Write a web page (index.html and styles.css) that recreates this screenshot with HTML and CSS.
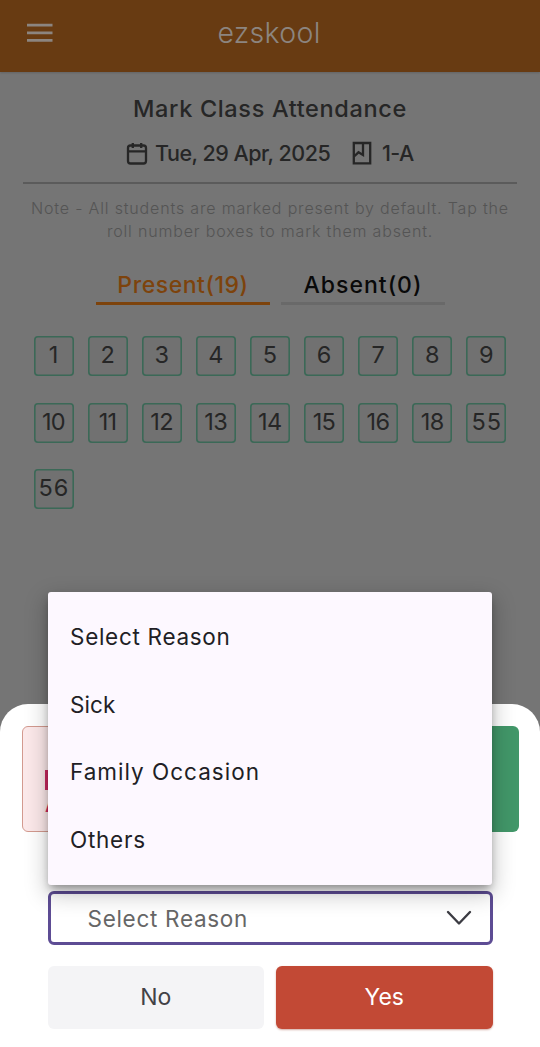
FILE: index.html
```html
<!DOCTYPE html>
<html lang="en">
<head>
<meta charset="utf-8">
<title>ezskool</title>
<link rel="stylesheet" href="styles.css">
</head>
<body>
<div class="screen">
  <header class="bar">
    <svg class="menu" width="28" height="20" viewBox="0 0 28 20"><path d="M1 2.2H26.5M1 9.8H26.5M1 17.3H26.5" stroke="currentColor" stroke-width="2.8"/></svg>
    <span class="brand">ezskool</span>
  </header>
  <main class="page">
    <h1 class="title">Mark Class Attendance</h1>
    <div class="meta">
      <svg class="cal" width="22" height="24" viewBox="0 0 22 24" fill="none" stroke="currentColor" stroke-width="2.3"><rect x="2" y="4.5" width="18" height="18" rx="2.5"/><path d="M2 10.3H20M6.8 2V7M15.2 2V7"/></svg>
      <span class="date">Tue, 29 Apr, 2025</span>
      <svg class="book" width="20" height="24" viewBox="0 0 20 24" fill="none" stroke="currentColor" stroke-width="2.3"><path d="M1.8 2H18.2V22.3H1.8ZM11 2V14L6.5 11.3L2 15.5"/></svg>
      <span class="cls">1-A</span>
    </div>
    <hr class="rule">
    <p class="note"><span class="n1">Note - All students are marked present by default. Tap the</span><br><span class="n2">roll number boxes to mark them absent.</span></p>
    <nav class="tabs">
      <span class="tab present"><span>Present(19)</span></span>
      <span class="tab absent"><span>Absent(0)</span></span>
    </nav>
    <div class="grid">
      <span>1</span><span>2</span><span>3</span><span>4</span><span>5</span><span>6</span><span>7</span><span>8</span><span>9</span>
      <span class="tight">10</span><span class="tight">11</span><span class="tight">12</span><span class="tight">13</span><span class="tight">14</span><span class="tight">15</span><span class="tight">16</span><span class="tight">18</span><span class="wide">55</span>
      <span class="wide">56</span>
    </div>
  </main>
  <section class="sheet">
    <div class="cards">
      <div class="card pink"><i class="mark"></i><b class="initial">A</b></div>
      <div class="card green"></div>
    </div>
    <div class="form">
      <div class="select">
        <span>Select Reason</span>
        <svg width="26" height="16" viewBox="0 0 26 16" fill="none" stroke="#3c3c43" stroke-width="2.4" stroke-linecap="round" stroke-linejoin="round"><path d="M2 2L13 13.5L24 2"/></svg>
      </div>
      <div class="actions">
        <button class="btn no">No</button>
        <button class="btn yes">Yes</button>
      </div>
    </div>
  </section>
  <ul class="popup">
    <li class="o1">Select Reason</li><li class="o2">Sick</li><li class="o3">Family Occasion</li><li class="o4">Others</li>
  </ul>
</div>
</body>
</html>
```

FILE: styles.css
```css
* { box-sizing: border-box; }
body { margin: 0; font-family: Inter, "Liberation Sans", sans-serif; }
.screen { position: relative; width: 540px; height: 1047px; background: #757575; overflow: hidden; display: flex; flex-direction: column; color: #262626; }
.bar { height: 72px; background: #683b12; color: #8c8580; display: grid; grid-template-columns: 80px 1fr 80px; align-items: center; padding-bottom: 6px; box-shadow: 0 1px 2px rgba(0,0,0,.15); }
.menu { margin-left: 25.5px; }
.brand { text-align: center; font-size: 28.5px; font-weight: 350; letter-spacing: .3px; margin: 0 2px 2px 0; }
.page { flex: 1; padding: 0 23px; }
.title { margin: 22px 0 0; font-size: 23.5px; line-height: 30px; font-weight: 500; text-align: center; letter-spacing: .65px; white-space: nowrap; }
.meta { display: flex; margin: 17px 0 0 103px; height: 24px; align-items: center; font-size: 21.5px; font-weight: 500; white-space: nowrap; }
.date { margin-left: 7px; width: 175px; letter-spacing: -.5px; }
.book { margin-left: 22px; }
.cls { margin-left: 10px; letter-spacing: -.6px; }
.rule { margin: 17px 0 0; border: 0; height: 2px; background: #5b5b5b; }
.note { margin: 13px 0 0; font-size: 16px; line-height: 22.5px; text-align: center; color: #545454; font-weight: 350; white-space: nowrap; letter-spacing: .83px; }
.tabs { display: flex; gap: 11px; margin: 26px 0 0 73px; }
.tab { height: 36.5px; font-size: 23px; font-weight: 500; line-height: 34px; text-align: center; border-bottom: 3px solid #7d430c; color: #7d430c; width: 174px; white-space: nowrap; letter-spacing: .55px; }
.tab.absent { width: 164px; color: #090909; border-color: #696969; letter-spacing: 1px; }
.grid { display: grid; grid-template-columns: repeat(9, 40px); column-gap: 14.1px; row-gap: 26.7px; margin: 31.5px 0 0 10.5px; }
.grid span { height: 40px; border-radius: 4px; background: #717171; box-shadow: inset 0 0 0 1.6px #3b6957; text-align: center; line-height: 38.4px; font-size: 23.5px; }
.grid .tight { letter-spacing: -.6px; }
.grid .wide { letter-spacing: 1px; text-indent: 1px; }
.sheet { height: 343px; background: #fff; border-radius: 28px 28px 0 0; padding: 21.5px 21.5px 0; }
.cards { display: flex; justify-content: space-between; height: 106.5px; }
.card { width: 240px; border-radius: 6px; }
.pink { background: #fce9ea; border: 1px solid #d39a8f; padding: 43px 0 0 22.5px; display: flex; flex-direction: column; }
.mark { display: block; width: 15px; height: 20px; background: #cb2860; }
.initial { color: #cb2860; font-size: 20px; line-height: 20px; margin-top: 5px; }
.green { background: #429769; }
.form { padding: 59px 26px 0; }
.select { height: 54px; border: 3px solid #5d4c94; border-radius: 6px; display: flex; align-items: center; justify-content: space-between; padding: 0 17.5px 0 37px; font-size: 22.5px; letter-spacing: .7px; color: #666; }
.actions { display: grid; grid-template-columns: 1fr 1fr; gap: 12px; margin-top: 20.5px; }
.btn { height: 63px; border: 0; border-radius: 6px; font: 23px Inter, sans-serif; }
.no { background: #f4f4f6; color: #424246; }
.yes { background: #c24935; color: #fff; box-shadow: 0 1px 2px rgba(150,50,30,.4); }
.popup { position: absolute; left: 47.5px; top: 592.4px; width: 444.5px; height: 292.4px; margin: 0; padding: 11px 22.5px; list-style: none; background: #fdf8ff; border-radius: 3px; box-shadow: 0 5px 8px -2px rgba(0,0,0,.35), 0 8px 22px 2px rgba(0,0,0,.22); }
.popup li { height: 67.5px; line-height: 67.5px; font-size: 22.5px; letter-spacing: .7px; color: #211e25; }
.popup .o2 { letter-spacing: .1px; }
.popup .o3 { letter-spacing: 1px; }
.popup .o4 { letter-spacing: .75px; }
```
